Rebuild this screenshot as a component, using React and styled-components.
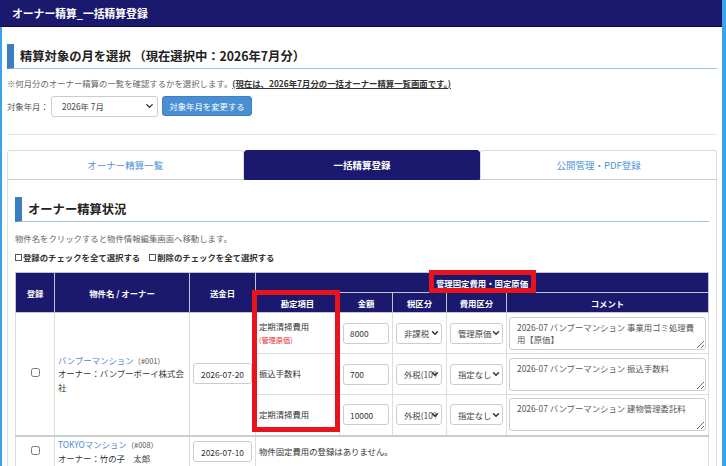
import React from "react";
import styled, { createGlobalStyle } from "styled-components";
import { ChevronDown } from "lucide-react";

const GlobalStyle = createGlobalStyle`
  * { box-sizing: border-box; }
  html, body { margin: 0; padding: 0; background: #fff; }
  body {
    font-family: "Noto Sans CJK JP", "Noto Sans", sans-serif;
    color: #333;
  }
`;

const NAVY = "#1b196e";
const SKY = "#3da2ea";

const Page = styled.div`
  width: 726px;
  height: 466px;
  overflow: hidden;
  border-right: 4px solid ${SKY};
`;

const TopBar = styled.header`
  height: 27px;
  background: ${NAVY};
  border-bottom: 1px solid #0e0d48;
  color: #fff;
  font-size: 10.8px;
  font-weight: bold;
  padding-left: 12px;
  display: flex;
  align-items: center;
`;

const Main = styled.main`
  border-left: 2px solid ${SKY};
  padding: 17px 5px 0 5px;
  height: 439px;
`;

const SectionTitle = styled.h2`
  margin: 0;
  height: 25px;
  display: flex;
  align-items: center;
  border-left: 7px solid #3b7dbf;
  border-bottom: 1px solid #9dc1e2;
  padding-left: 6px;
  font-size: 12.3px;
  font-weight: bold;
  color: #222;
`;

const Note = styled.p`
  margin: ${(p) => p.$mt || 0}px 0 0;
  font-size: 8.4px;
  line-height: 12px;
  color: #666;
`;

const NoteStrong = styled.span`
  color: #333;
  font-weight: bold;
  text-decoration: underline;
`;

const FormRow = styled.div`
  margin-top: 6px;
  height: 22px;
  display: flex;
  align-items: center;
  font-size: 8.4px;
  color: #555;
`;

const Label = styled.span`
  width: 44px;
`;

const SelectWrap = styled.div`
  position: relative;
  width: ${(p) => p.$w}px;
  height: ${(p) => p.$h || 21}px;
  margin-right: ${(p) => p.$mr || 0}px;
`;

const Select = styled.select`
  appearance: none;
  width: 100%;
  height: 100%;
  border: 1px solid #ccc;
  border-radius: 3px;
  background: #fff;
  font-family: inherit;
  font-size: 8.4px;
  color: #444;
  padding: 0 ${(p) => p.$pr || 10}px 0 ${(p) => p.$pl || 6}px;
  white-space: nowrap;
  overflow: hidden;
`;

const Chevron = styled(ChevronDown)`
  position: absolute;
  right: ${(p) => p.$r || 3}px;
  top: 50%;
  transform: translateY(-50%);
  pointer-events: none;
  color: #333;
`;

const Button = styled.button`
  height: 20px;
  width: 90px;
  border: 1px solid #3f80c2;
  border-radius: 3px;
  background: #4a8fd3;
  color: #fff;
  font-family: inherit;
  font-size: 8.4px;
  padding: 0;
`;

const Divider = styled.hr`
  margin: 17px 0 0;
  border: none;
  border-top: 1px solid #e6e6e6;
`;

const Tabs = styled.nav`
  margin-top: 15px;
  display: flex;
`;

const Tab = styled.div`
  flex: 1;
  height: 30px;
  display: flex;
  align-items: center;
  justify-content: center;
  font-size: 9.5px;
  border: 1px solid ${(p) => (p.$active ? NAVY : "#ddd")};
  border-bottom-color: ${(p) => (p.$active ? NAVY : "#ccc")};
  border-radius: 3px 3px 0 0;
  background: ${(p) => (p.$active ? NAVY : "#fff")};
  color: ${(p) => (p.$active ? "#fff" : "#4f93d8")};
  font-weight: ${(p) => (p.$active ? "bold" : "normal")};
`;

const Panel = styled.section`
  border: 1px solid #ddd;
  border-top: none;
  padding: 17px 7px 0 7px;
  height: 300px;
`;

const CheckLine = styled.div`
  margin-top: 7px;
  font-size: 8.4px;
  line-height: 12px;
  font-weight: bold;
  color: #333;
  display: flex;
  align-items: center;
`;

const BoxCheck = styled.input`
  appearance: none;
  width: 7px;
  height: 7px;
  margin: 0 1px 0 0;
  border: 1px solid #555;
  background: #fff;
`;

const CheckLabel = styled.label`
  display: flex;
  align-items: center;
  margin-right: 9px;
`;

const TableWrap = styled.div`
  position: relative;
  margin-top: 9px;
`;

const Table = styled.table`
  width: 693px;
  border-collapse: collapse;
  table-layout: fixed;
  font-size: 8.4px;
  color: #333;
`;

const Th = styled.th`
  background: ${NAVY};
  color: #fff;
  font-weight: bold;
  border: 1px solid #c3c3d3;
  height: 20px;
  padding: 0;
  text-align: center;
`;

const Td = styled.td`
  border: 1px solid #ddd;
  border-top-width: ${(p) => (p.$sep ? 2 : 1)}px;
  border-top-color: ${(p) => (p.$sep ? "#ccc" : "#ddd")};
  padding: 0 ${(p) => p.$px ?? 3}px;
  height: ${(p) => p.$h || 41}px;
  vertical-align: middle;
  text-align: ${(p) => p.$align || "left"};
  line-height: 13.5px;
`;

const RowCheck = styled.input`
  width: 9px;
  height: 9px;
  margin: 0;
`;

const PropLink = styled.a`
  color: #4a86d4;
  text-decoration: none;
`;

const PropCode = styled.span`
  color: #555;
  font-size: 7.4px;
`;

const SubNote = styled.div`
  color: #e23232;
  font-size: 7.2px;
  line-height: 12px;
`;

const TextInput = styled.input`
  width: 100%;
  height: 21px;
  border: 1px solid #ccc;
  border-radius: 3px;
  font-family: inherit;
  font-size: 8.4px;
  color: #333;
  padding: 0 6px;
  text-align: ${(p) => p.$align || "left"};
  display: block;
`;

const Comment = styled.textarea`
  display: block;
  width: 100%;
  height: 33px;
  border: 1px solid #ccc;
  border-radius: 3px;
  font-family: inherit;
  font-size: 8.4px;
  line-height: 12px;
  color: #555;
  padding: 3px 7px;
  resize: vertical;
`;

const Mark = styled.div`
  position: absolute;
  border: 5px solid #e8141c;
  pointer-events: none;
`;

const rows = [
  { item: "定期清掃費用", note: "(管理原価)", amount: "8000", tax: "非課税", cat: "管理原価", comment: "2026-07 バンブーマンション 事業用ゴミ処理費用【原価】" },
  { item: "振込手数料", amount: "700", tax: "外税(10%)", cat: "指定なし", comment: "2026-07 バンブーマンション 振込手数料" },
  { item: "定期清掃費用", amount: "10000", tax: "外税(10%)", cat: "指定なし", comment: "2026-07 バンブーマンション 建物管理委託料" },
];

const Dropdown = ({ value, w }) => (
  <SelectWrap $w={w}>
    <Select defaultValue={value} $pl={7} $pr={4}>
      <option>{value}</option>
    </Select>
    <Chevron size={10} strokeWidth={3.5} $r={2} />
  </SelectWrap>
);

export default function App() {
  return (
    <Page>
      <GlobalStyle />
      <TopBar>オーナー精算_一括精算登録</TopBar>
      <Main>
        <SectionTitle>精算対象の月を選択 （現在選択中：2026年7月分）</SectionTitle>
        <Note $mt={8}>
          ※何月分のオーナー精算の一覧を確認するかを選択します。
          <NoteStrong>(現在は、2026年7月分の一括オーナー精算一覧画面です。)</NoteStrong>
        </Note>
        <FormRow>
          <Label>対象年月：</Label>
          <SelectWrap $w={107} $mr={4}>
            <Select defaultValue="2026年 7月" $pl={10}>
              <option>2026年 7月</option>
            </Select>
            <Chevron size={11} strokeWidth={3} $r={3} />
          </SelectWrap>
          <Button>対象年月を変更する</Button>
        </FormRow>
        <Divider />
        <Tabs>
          <Tab>オーナー精算一覧</Tab>
          <Tab $active>一括精算登録</Tab>
          <Tab>公開管理・PDF登録</Tab>
        </Tabs>
        <Panel>
          <SectionTitle>オーナー精算状況</SectionTitle>
          <Note $mt={10}>物件名をクリックすると物件情報編集画面へ移動します。</Note>
          <CheckLine>
            <CheckLabel><BoxCheck type="checkbox" />登録のチェックを全て選択する</CheckLabel>
            <CheckLabel><BoxCheck type="checkbox" />削除のチェックを全て選択する</CheckLabel>
          </CheckLine>
          <TableWrap>
            <Table>
              <colgroup>
                <col style={{ width: 39 }} />
                <col style={{ width: 135 }} />
                <col style={{ width: 66 }} />
                <col style={{ width: 84 }} />
                <col style={{ width: 53 }} />
                <col style={{ width: 54 }} />
                <col style={{ width: 60 }} />
                <col style={{ width: 202 }} />
              </colgroup>
              <thead>
                <tr>
                  <Th rowSpan={2}>登録</Th>
                  <Th rowSpan={2}>物件名 / オーナー</Th>
                  <Th rowSpan={2}>送金日</Th>
                  <Th colSpan={5}>管理固定費用・固定原価</Th>
                </tr>
                <tr>
                  <Th>勘定項目</Th>
                  <Th>金額</Th>
                  <Th>税区分</Th>
                  <Th>費用区分</Th>
                  <Th>コメント</Th>
                </tr>
              </thead>
              <tbody>
                {rows.map((r, i) => (
                  <tr key={i}>
                    {i === 0 && (
                      <>
                        <Td rowSpan={3} $align="center"><RowCheck type="checkbox" /></Td>
                        <Td rowSpan={3}>
                          <PropLink href="#">バンブーマンション</PropLink>
                          <PropCode>（#001）</PropCode>
                          <br />
                          オーナー：バンブーボーイ株式会社
                        </Td>
                        <Td rowSpan={3}><TextInput defaultValue="2026-07-20" $align="center" /></Td>
                      </>
                    )}
                    <Td>
                      {r.item}
                      {r.note && <SubNote>{r.note}</SubNote>}
                    </Td>
                    <Td><TextInput defaultValue={r.amount} /></Td>
                    <Td><Dropdown value={r.tax} w={46} /></Td>
                    <Td><Dropdown value={r.cat} w={53} /></Td>
                    <Td $px={2}><Comment defaultValue={r.comment} /></Td>
                  </tr>
                ))}
                <tr>
                  <Td $sep $h={32} $align="center"><RowCheck type="checkbox" /></Td>
                  <Td $sep $h={32}>
                    <PropLink href="#">TOKYOマンション</PropLink>
                    <PropCode>（#008）</PropCode>
                    <br />
                    オーナー：竹の子　太郎
                  </Td>
                  <Td $sep $h={32}><TextInput defaultValue="2026-07-10" $align="center" /></Td>
                  <Td $sep $h={32} colSpan={5}>物件固定費用の登録はありません。</Td>
                </tr>
              </tbody>
            </Table>
            <Mark style={{ left: 237, top: 18, width: 88, height: 142 }} />
            <Mark style={{ left: 414, top: -2, width: 107, height: 23 }} />
          </TableWrap>
        </Panel>
      </Main>
    </Page>
  );
}
